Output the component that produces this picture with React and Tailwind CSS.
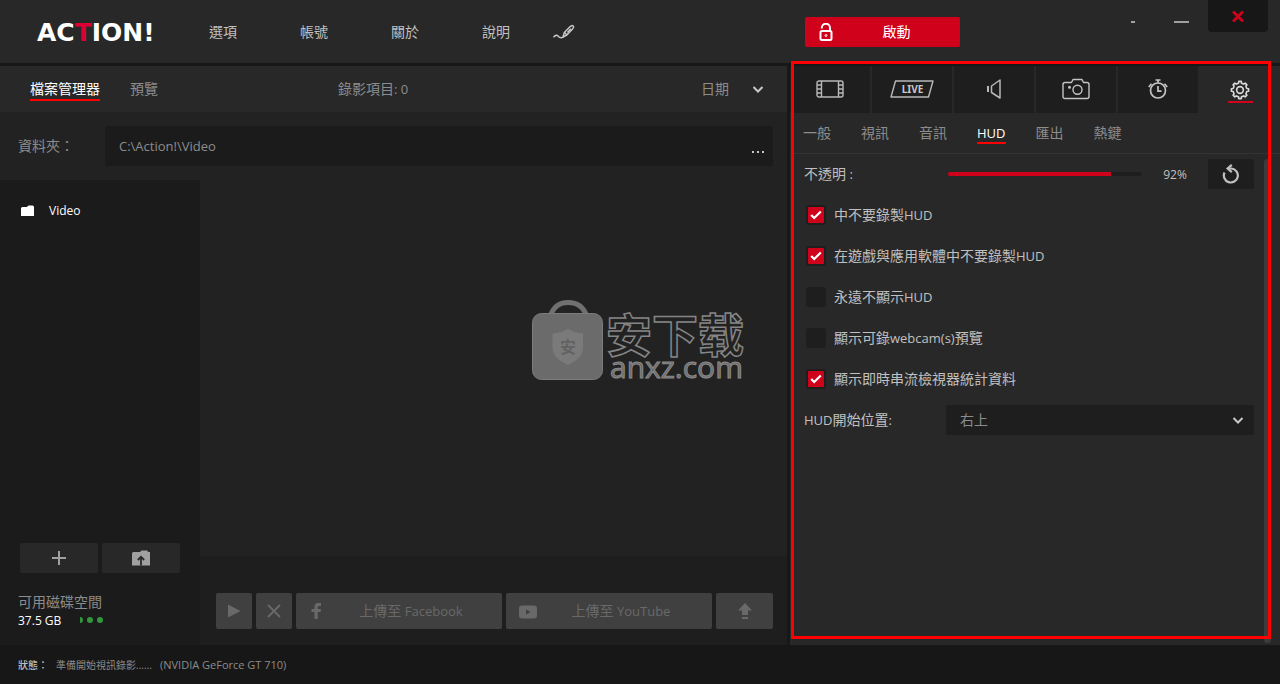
import React, { useState } from "react";

const FONT = "font-['Open_Sans','Noto_Sans_CJK_TC',sans-serif]";

/* Latin runs are set one size smaller than the Chinese text around them. */
function Mixed({ children }) {
  return children.split(/([\x20-\x7e]+)/).map((part, i) =>
    /^[\x20-\x7e]+$/.test(part) ? (
      <span key={i} className="text-[13px] whitespace-pre">{part}</span>
    ) : (
      part
    )
  );
}

function Chevron({ className }) {
  return (
    <svg viewBox="0 0 12 8" className={`pointer-events-none h-2 w-3 ${className}`} fill="none" stroke="#c8c8c8" strokeWidth="2">
      <path d="M1.500 2 6 6.500 10.500 2" />
    </svg>
  );
}

function PenIcon() {
  return (
    <svg viewBox="0 0 22 16" className="h-4 w-[22px]" fill="none" stroke="#c8c8c8" strokeWidth="1.500" strokeLinejoin="round" strokeLinecap="round">
      <path d="M1 12.800C2.500 10.800 4 10.800 5 12S8 14.500 10 13.200" />
      <path d="M10 13.200 11.300 8.500 17 2.800C18.300 1.500 19.500 1.300 20.200 2S20.500 4 19.300 5.200L13.800 11Z" />
      <path d="M11.800 8.700 13.500 10.500M14.800 8 17.500 5.200" />
    </svg>
  );
}

function Logo() {
  return (
    <svg viewBox="0 0 122 34" className="h-[34px] w-[122px]" role="img" aria-label="ACTION!">
      <text x="1" y="26" fill="#fff" fontSize="25" fontWeight="700" fontFamily="DejaVu Sans, sans-serif">
        AC<tspan fill="#dc0032">T</tspan>ION!
      </text>
    </svg>
  );
}

function Header() {
  const nav = ["選項", "帳號", "關於", "說明"];
  return (
    <header className="flex h-[66px] shrink-0 border-b-[3px] border-[#171717] bg-[#282828]">
      <div className="flex min-w-0 flex-1 items-center pl-9">
        <Logo />
        <nav className="ml-[51px] flex items-center gap-[63px] text-[14px] text-[#c0c0c0]">
          {nav.map((n) => (
            <a key={n} href="#" className="whitespace-nowrap">{n}</a>
          ))}
        </nav>
        <button aria-label="繪圖" className="ml-[43px]"><PenIcon /></button>
      </div>
      <div className="flex w-[490px] shrink-0 items-start justify-between pr-3 pl-[15px]">
        <button className="mt-[17px] flex h-[30px] w-[155px] items-center rounded-[2px] bg-[#d0021b] pr-2 pl-[14px] text-[14px] text-white">
          <svg viewBox="0 0 14 18" className="h-[18px] w-[14px]" fill="none" stroke="#fff" strokeWidth="2">
            <rect x="1.500" y="8" width="11" height="9" rx="1.500" />
            <path d="M2.800 5.500V4.800a4 4 0 0 1 8.200 0V8" />
            <circle cx="7" cy="12.500" r="1" strokeWidth="1" />
          </svg>
          <span className="flex-1 pb-0.5 pl-2 text-center">啟動</span>
        </button>
        <div className="flex">
          <button aria-label="縮小為圖示" className="flex h-11 w-12 items-center justify-center">
            <span className="h-0.5 w-1 bg-[#a0a0a0]" />
          </button>
          <button aria-label="最小化" className="flex h-11 w-12 items-center justify-center">
            <span className="h-0.5 w-[15px] bg-[#a0a0a0]" />
          </button>
          <button aria-label="關閉" className="ml-[3px] flex h-8 w-[60px] items-center justify-center rounded-b-[4px] bg-[#171717]">
            <svg viewBox="0 0 12 12" className="size-3" stroke="#d0021b" strokeWidth="2.800">
              <path d="M1 1.500 11 11.500M11 1.500 1 11.500" />
            </svg>
          </button>
        </div>
      </div>
    </header>
  );
}

function Watermark() {
  return (
    <svg viewBox="0 0 216 90" className="absolute top-[120px] right-[39px] h-[90px] w-[216px]" aria-hidden="true">
      <path d="M18 17C21 7 27 2.500 36 2.500S52 7 55 17" fill="none" stroke="#707070" strokeWidth="5" />
      <rect x="0.500" y="13.500" width="70" height="66" rx="9" fill="#6b6b6b" stroke="#7c7c7c" />
      <path d="M36 28.500C31 32 26 33 20.500 33.500V48c0 8 7 13 15.500 17 8.500-4 15-9 15-17V33.500C46 33 41 32 36 28.500Z" fill="#7a7a7a" />
      <text x="36" y="53" textAnchor="middle" fontSize="16" fontWeight="700" fill="#626262" fontFamily="Noto Sans CJK SC, sans-serif">安</text>
      <text x="74" y="52" fontSize="46" fontWeight="700" fill="#222" stroke="#858585" strokeWidth="1.500" fontFamily="Noto Sans CJK SC, sans-serif">安下载</text>
      <text x="78" y="78" fontSize="30" fill="#6b6b6b" stroke="#8a8a8a" strokeWidth="1" fontFamily="Open Sans, sans-serif">anxz.com</text>
    </svg>
  );
}

function FileManager() {
  const action = "flex h-9 items-center rounded-[2px] bg-[#404040] text-[#696969]";
  return (
    <main className="flex min-w-0 flex-1 flex-col border-r-[3px] border-[#171717] bg-[#222222]">
      <div className="flex h-[46px] shrink-0 items-center bg-[#282828] pr-[23px] pl-[30px] text-[14px] text-[#8c8c8c]">
        <div className="flex gap-[30px]">
          <button className="border-y-2 border-t-transparent border-b-[#ff0000] leading-5 text-white">檔案管理器</button>
          <button className="border-y-2 border-transparent leading-5">預覽</button>
        </div>
        <span className="ml-[180px]"><Mixed>錄影項目: 0</Mixed></span>
        <label className="ml-auto grid items-center">
          <select aria-label="排序" className="col-start-1 row-start-1 w-[63px] appearance-none bg-transparent leading-5 outline-none">
            <option>日期</option>
          </select>
          <Chevron className="col-start-1 row-start-1 justify-self-end" />
        </label>
      </div>
      <div className="flex h-[68px] shrink-0 items-center pr-[14px] pl-[18px] text-[14px] text-[#8c8c8c]">
        <label htmlFor="folder" className="w-[87px] pb-0.5">資料夾：</label>
        <div className="flex h-10 min-w-0 flex-1 items-center rounded-[2px] bg-[#1b1b1b] pr-2 pl-[14px]">
          <input id="folder" defaultValue="C:\Action!\Video" className="min-w-0 flex-1 bg-transparent pt-0.5 text-[13px] outline-none" />
          <button aria-label="瀏覽" className="flex gap-[3px] px-0 pt-[11px] pr-px">
            <span className="size-0.5 bg-[#c8c8c8]" />
            <span className="size-0.5 bg-[#c8c8c8]" />
            <span className="size-0.5 bg-[#c8c8c8]" />
          </button>
        </div>
      </div>
      <div className="flex flex-1">
        <aside className="flex w-[200px] shrink-0 flex-col bg-[#1b1b1b] pb-[15px]">
          <button className="mt-[21px] flex items-center gap-[14px] pl-[21px] text-[12px] leading-5 text-white">
            <svg viewBox="0 0 14 12" className="h-3 w-[14px]" fill="#fff">
              <path d="M0 3.500Q0 2 1.500 2H6Q6.500 .5 8 .5h3.500Q13 .5 13 2V11H0Z" />
            </svg>
            Video
          </button>
          <div className="mt-auto flex gap-1 px-5">
            <button aria-label="新增資料夾" className="flex h-[30px] flex-1 items-center justify-center rounded-[2px] bg-[#282828]">
              <svg viewBox="0 0 14 14" className="size-[14px]" stroke="#a0a0a0" strokeWidth="2"><path d="M7 0V14M0 7H14" /></svg>
            </button>
            <button aria-label="匯入" className="flex h-[30px] flex-1 items-center justify-center rounded-[2px] bg-[#282828]">
              <svg viewBox="0 0 18 16" className="h-4 w-[18px]">
                <path d="M0 3.500Q0 2 1.500 2H8L9.500 .5H15L16.500 2H18V15.500H0Z" fill="#a0a0a0" />
                <path d="M9 15.500V7M5.800 10 9 6.800 12.200 10" fill="none" stroke="#282828" strokeWidth="1.800" />
              </svg>
            </button>
          </div>
          <div className="mt-5 pl-[18px] text-[14px] leading-[18px] text-[#8c8c8c]">可用磁碟空間</div>
          <div className="flex items-center gap-[19px] pt-px pl-[18px] text-[12px] leading-[18px] text-white">
            37.5 GB
            <svg viewBox="0 0 24 8" className="h-2 w-6" fill="#32963c">
              <path d="M0 0a3 3 0 0 1 0 6Z" /><circle cx="10" cy="3" r="3" /><circle cx="20" cy="3" r="3" />
            </svg>
          </div>
        </aside>
        <div className="flex min-w-0 flex-1 flex-col">
          <div className="relative flex-1"><Watermark /></div>
          <div className="flex gap-1 bg-[#1e1e1e] pt-[37px] pr-[14px] pb-4 pl-4 text-[14px]">
            <button aria-label="播放" className={`${action} w-9 justify-center`}>
              <svg viewBox="0 0 14 14" className="size-[14px]" fill="#696969"><path d="M1 .5 13.500 7 1 13.500Z" /></svg>
            </button>
            <button aria-label="刪除" className={`${action} w-9 justify-center`}>
              <svg viewBox="0 0 14 14" className="size-[14px]" stroke="#696969" strokeWidth="1.800"><path d="M1 1 13 13M13 1 1 13" /></svg>
            </button>
            <button className={`${action} flex-1 pr-2 pl-3`}>
              <svg viewBox="0 0 18 16" className="h-4 w-5" fill="#696969">
                <path d="M5.500 16V9H2.500V6h3V4Q5.500 0 9.500 0h2.500v3h-2Q8.700 3 8.700 4.300V6H12l-.5 3H8.700V16Z" />
              </svg>
              <span className="flex-1 text-center"><Mixed>上傳至 Facebook</Mixed></span>
            </button>
            <button className={`${action} flex-1 pr-2 pl-3`}>
              <svg viewBox="0 0 20 14" className="mt-0.5 h-[14px] w-5">
                <rect x="1" y=".5" width="18" height="13" rx="3" fill="#696969" /><path d="M8 4.500V9.500L12.500 7Z" fill="#404040" />
              </svg>
              <span className="flex-1 text-center"><Mixed>上傳至 YouTube</Mixed></span>
            </button>
            <button aria-label="上傳" className={`${action} w-[57px] justify-center`}>
              <svg viewBox="0 0 14 16" className="h-4 w-[14px]" fill="#696969"><path d="M7 0 14 7.500H10V12H4V7.500H0ZM4 14h6v2H4Z" /></svg>
            </button>
          </div>
        </div>
      </div>
    </main>
  );
}

const FilmIcon = () => (
  <svg viewBox="0 0 28 18" className="h-[18px] w-7" fill="none" stroke="#b8b8b8" strokeWidth="1.400">
    <rect x="1" y="1" width="26" height="16" rx="2" />
    <path d="M5.500 1V17M22.500 1V17M1 5H5.500M1 9H5.500M1 13H5.500M22.500 5H27M22.500 9H27M22.500 13H27" />
  </svg>
);
const LiveIcon = () => (
  <svg viewBox="0 0 44 18" className="h-[18px] w-11">
    <path d="M5.500 1H43L38.500 17H1Z" fill="none" stroke="#b8b8b8" strokeWidth="1.400" strokeLinejoin="round" />
    <text x="22.500" y="13" textAnchor="middle" fontSize="10" fontWeight="700" fill="#c8c8c8" fontFamily="Noto Sans, sans-serif">LIVE</text>
  </svg>
);
const SpeakerIcon = () => (
  <svg viewBox="0 0 16 20" className="h-5 w-4" fill="none" stroke="#b8b8b8" strokeWidth="1.500" strokeLinejoin="round">
    <path d="M2 7V13" strokeWidth="2" />
    <path d="M5.500 7 14 1V19L5.500 13.500Z" />
  </svg>
);
const CameraIcon = () => (
  <svg viewBox="0 0 28 22" className="h-[22px] w-7" fill="none" stroke="#c4c4c4" strokeWidth="1.400" strokeLinejoin="round">
    <path d="M3 4.500H9.500L11 1.500H20L21.500 4.500H25Q27 4.500 27 6.500V18.500Q27 20.500 25 20.500H3Q1 20.500 1 18.500V6.500Q1 4.500 3 4.500Z" />
    <circle cx="15.500" cy="11.800" r="4.500" />
    <circle cx="7.500" cy="9.300" r=".8" fill="#c4c4c4" />
  </svg>
);
const TimerIcon = () => (
  <svg viewBox="0 0 20 20" className="size-5" fill="none" stroke="#c4c4c4" strokeWidth="1.700">
    <circle cx="10" cy="11.500" r="7.500" />
    <path d="M10 7V12.200H13.500M10 4V1M7.500 1H12.500M.8 8 3.500 4.800M19.200 8 16.500 4.800" />
  </svg>
);
const GearIcon = () => (
  <svg viewBox="0 0 24 24" className="size-5" fill="none" stroke="#d8d8d8" strokeWidth="2" strokeLinejoin="round">
    <path d="M20.200 10.200 22.300 10.500V13.500L20.200 13.800 19.100 16.500 20.300 18.200 18.200 20.300 16.500 19.100 13.800 20.200 13.500 22.300H10.500L10.200 20.200 7.500 19.100 5.800 20.300 3.700 18.200 4.900 16.500 3.800 13.800 1.700 13.500V10.500L3.800 10.200 4.900 7.500 3.700 5.800 5.800 3.700 7.500 4.900 10.200 3.800 10.500 1.700H13.500L13.800 3.800 16.500 4.900 18.200 3.700 20.300 5.800 19.100 7.500Z" />
    <circle cx="12" cy="12" r="4" />
  </svg>
);

function CheckRow({ label, initial }) {
  return (
    <label className="flex h-[41px] items-center gap-2 pl-4">
      <span className="grid place-items-center">
        <input
          type="checkbox"
          defaultChecked={initial}
          className="peer col-start-1 row-start-1 size-5 appearance-none rounded-[3px] border-2 border-[#1e1e1e] bg-[#1e1e1e] checked:bg-[#d0021b]"
        />
        <svg viewBox="0 0 12 10" className="pointer-events-none col-start-1 row-start-1 hidden h-[10px] w-3 peer-checked:block" fill="none" stroke="#fff" strokeWidth="2.200">
          <path d="M1.200 5 4.200 8 10.800 1.500" />
        </svg>
      </span>
      <span><Mixed>{label}</Mixed></span>
    </label>
  );
}

function Settings() {
  const [opacity, setOpacity] = useState(92);
  const tabs = [
    ["錄影", FilmIcon], ["直播", LiveIcon], ["音訊", SpeakerIcon], ["擷圖", CameraIcon], ["定時", TimerIcon],
  ];
  const fill = `${(opacity - 50) * 2}%`;
  return (
    <section className="relative flex w-[490px] shrink-0 flex-col bg-[#282828] text-[14px] text-[#c0c0c0]">
      <div className="grid h-[47px] shrink-0 grid-cols-6 gap-0.5">
        {tabs.map(([name, Icon]) => (
          <button key={name} aria-label={name} className="flex items-center justify-center bg-[#1e1e1e] pr-px pb-px"><Icon /></button>
        ))}
        <button aria-label="設定" className="flex flex-col items-center justify-center gap-px pt-1">
          <GearIcon />
          <span className="h-0.5 w-[25px] bg-[#d0021b]" />
        </button>
      </div>
      <nav className="flex h-[41px] shrink-0 items-center gap-[30px] border-b border-[#333333] pl-[13px] text-[#8c8c8c]">
        {["一般", "視訊", "音訊", "HUD", "匯出", "熱鍵"].map((t) => (
          <a
            key={t}
            href="#"
            className={t === "HUD" ? "border-y-2 border-t-transparent border-b-[#ff0000] leading-[18px] text-white" : "border-y-2 border-transparent leading-[18px]"}
          >
            <Mixed>{t}</Mixed>
          </a>
        ))}
      </nav>
      <div className="mt-[5px] flex h-[30px] items-center pr-[26px] pl-[14px]">
        <label htmlFor="opacity" className="w-[144px]"><Mixed>不透明 :</Mixed></label>
        <input
          id="opacity"
          type="range"
          min="50"
          max="100"
          value={opacity}
          onChange={(e) => setOpacity(Number(e.target.value))}
          style={{ backgroundImage: `linear-gradient(to right, #d0021b ${fill}, #1e1e1e ${fill})` }}
          className="h-1 min-w-0 flex-1 appearance-none rounded-full [&::-webkit-slider-thumb]:size-0 [&::-webkit-slider-thumb]:appearance-none"
        />
        <output htmlFor="opacity" className="w-[66px] pt-px text-center text-[12px]">{opacity}%</output>
        <button aria-label="重設" className="flex h-[30px] w-[46px] items-center justify-center rounded-[2px] bg-[#1e1e1e]">
          <svg viewBox="0 0 18 20" className="h-5 w-[18px]" fill="none" stroke="#c0c0c0" strokeWidth="2.200">
            <path d="M2.500 8.500A7 7 0 1 0 9.500 4.500H6" />
            <path d="M9.800 .8 5.600 4.500 9.800 8.200" />
          </svg>
        </button>
      </div>
      <div className="mt-[5px]">
        <CheckRow label="中不要錄製HUD" initial />
        <CheckRow label="在遊戲與應用軟體中不要錄製HUD" initial />
        <CheckRow label="永遠不顯示HUD" />
        <CheckRow label="顯示可錄webcam(s)預覽" />
        <CheckRow label="顯示即時串流檢視器統計資料" initial />
      </div>
      <div className="mt-[6px] flex items-center pr-[26px] pl-[14px]">
        <label htmlFor="position" className="w-[142px]"><Mixed>HUD開始位置:</Mixed></label>
        <div className="grid flex-1 items-center">
          <select id="position" className="col-start-1 row-start-1 h-[30px] appearance-none rounded-[2px] bg-[#1e1e1e] px-[14px] pb-0.5 text-[#8c8c8c] outline-none">
            <option>右上</option>
          </select>
          <Chevron className="col-start-1 row-start-1 mr-[10px] justify-self-end" />
        </div>
      </div>
      <div className="absolute top-[93px] right-[9px] bottom-0.5 w-[7px] rounded-full bg-[#3c3c3c]" />
      <div className="pointer-events-none absolute -top-[5px] right-[9px] bottom-1.5 left-px border-[3px] border-[#ff0000]" />
    </section>
  );
}

export default function App() {
  return (
    <div className={`flex min-h-screen flex-col bg-[#171717] ${FONT}`}>
      <Header />
      <div className="flex flex-1">
        <FileManager />
        <Settings />
      </div>
      <footer className="flex h-[39px] shrink-0 items-center bg-[#171717] pt-0.5 pl-[18px] text-[10px] text-[#8c8c8c]">
        <span className="w-[38px] font-medium text-[#c0c0c0]">狀態：</span>
        <span className="w-[104px]">準備開始視訊錄影......</span>
        <span className="text-[11px]">(NVIDIA GeForce GT 710)</span>
      </footer>
    </div>
  );
}
